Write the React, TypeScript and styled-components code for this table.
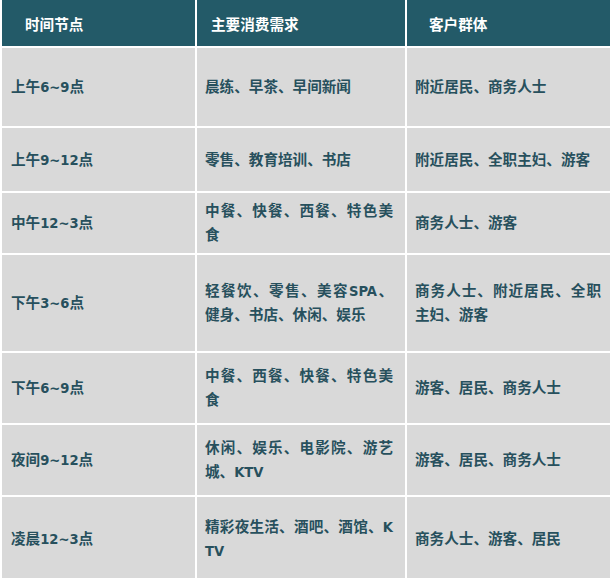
import React from 'react';
import styled, { createGlobalStyle } from 'styled-components';

const GlobalStyle = createGlobalStyle`
  html, body {
    margin: 0;
    padding: 0;
    background: #ffffff;
  }
  body {
    font-family: "DejaVu Sans Condensed", "Noto Sans", "Noto Sans CJK SC", sans-serif;
  }
`;

const rows = [
  { h: 78, time: '上午6~9点', need: '晨练、早茶、早间新闻', who: '附近居民、商务人士' },
  { h: 63, time: '上午9~12点', need: '零售、教育培训、书店', who: '附近居民、全职主妇、游客' },
  { h: 60, time: '中午12~3点', need: '中餐、快餐、西餐、特色美食', who: '商务人士、游客' },
  { h: 96, time: '下午3~6点', need: '轻餐饮、零售、美容SPA、健身、书店、休闲、娱乐', who: '商务人士、附近居民、全职主妇、游客' },
  { h: 70, time: '下午6~9点', need: '中餐、西餐、快餐、特色美食', who: '游客、居民、商务人士' },
  { h: 70, time: '夜间9~12点', need: '休闲、娱乐、电影院、游艺城、KTV', who: '游客、居民、商务人士' },
  { h: 84, time: '凌晨12~3点', need: '精彩夜生活、酒吧、酒馆、KTV', who: '商务人士、游客、居民' },
];

const Table = styled.div`
  display: flex;
  flex-direction: column;
  gap: 2px;
  padding-left: 2px;
  width: 610px;
  box-sizing: border-box;
  background: #ffffff;
`;

const Row = styled.div<{ $h: number }>`
  display: grid;
  grid-template-columns: 193px 208px 1fr;
  gap: 2px;
  height: ${p => p.$h}px;
`;

const HeadCell = styled.div<{ $pad: number }>`
  display: flex;
  align-items: center;
  background: #235a68;
  color: #ffffff;
  font-size: 14.6px;
  font-weight: 700;
  padding-left: ${p => p.$pad}px;
`;

const Cell = styled.div<{ $pad: number; $right?: number }>`
  display: flex;
  align-items: center;
  background: #d9d9d9;
  color: #27505d;
  font-size: 14.6px;
  font-weight: 700;
  line-height: 24px;
  padding-left: ${p => p.$pad}px;
  padding-right: ${p => p.$right ?? 0}px;
`;

const Text = styled.div`
  width: 100%;
  text-align: justify;
  word-break: break-all;
`;

export default function App() {
  return (
    <>
      <GlobalStyle />
      <Table>
        <Row $h={46}>
          <HeadCell $pad={23}>时间节点</HeadCell>
          <HeadCell $pad={14}>主要消费需求</HeadCell>
          <HeadCell $pad={22}>客户群体</HeadCell>
        </Row>
        {rows.map((r, i) => (
          <Row $h={r.h} key={i}>
            <Cell $pad={9}>
              <Text>{r.time}</Text>
            </Cell>
            <Cell $pad={8} $right={12}>
              <Text>{r.need}</Text>
            </Cell>
            <Cell $pad={8} $right={9}>
              <Text>{r.who}</Text>
            </Cell>
          </Row>
        ))}
      </Table>
    </>
  );
}
